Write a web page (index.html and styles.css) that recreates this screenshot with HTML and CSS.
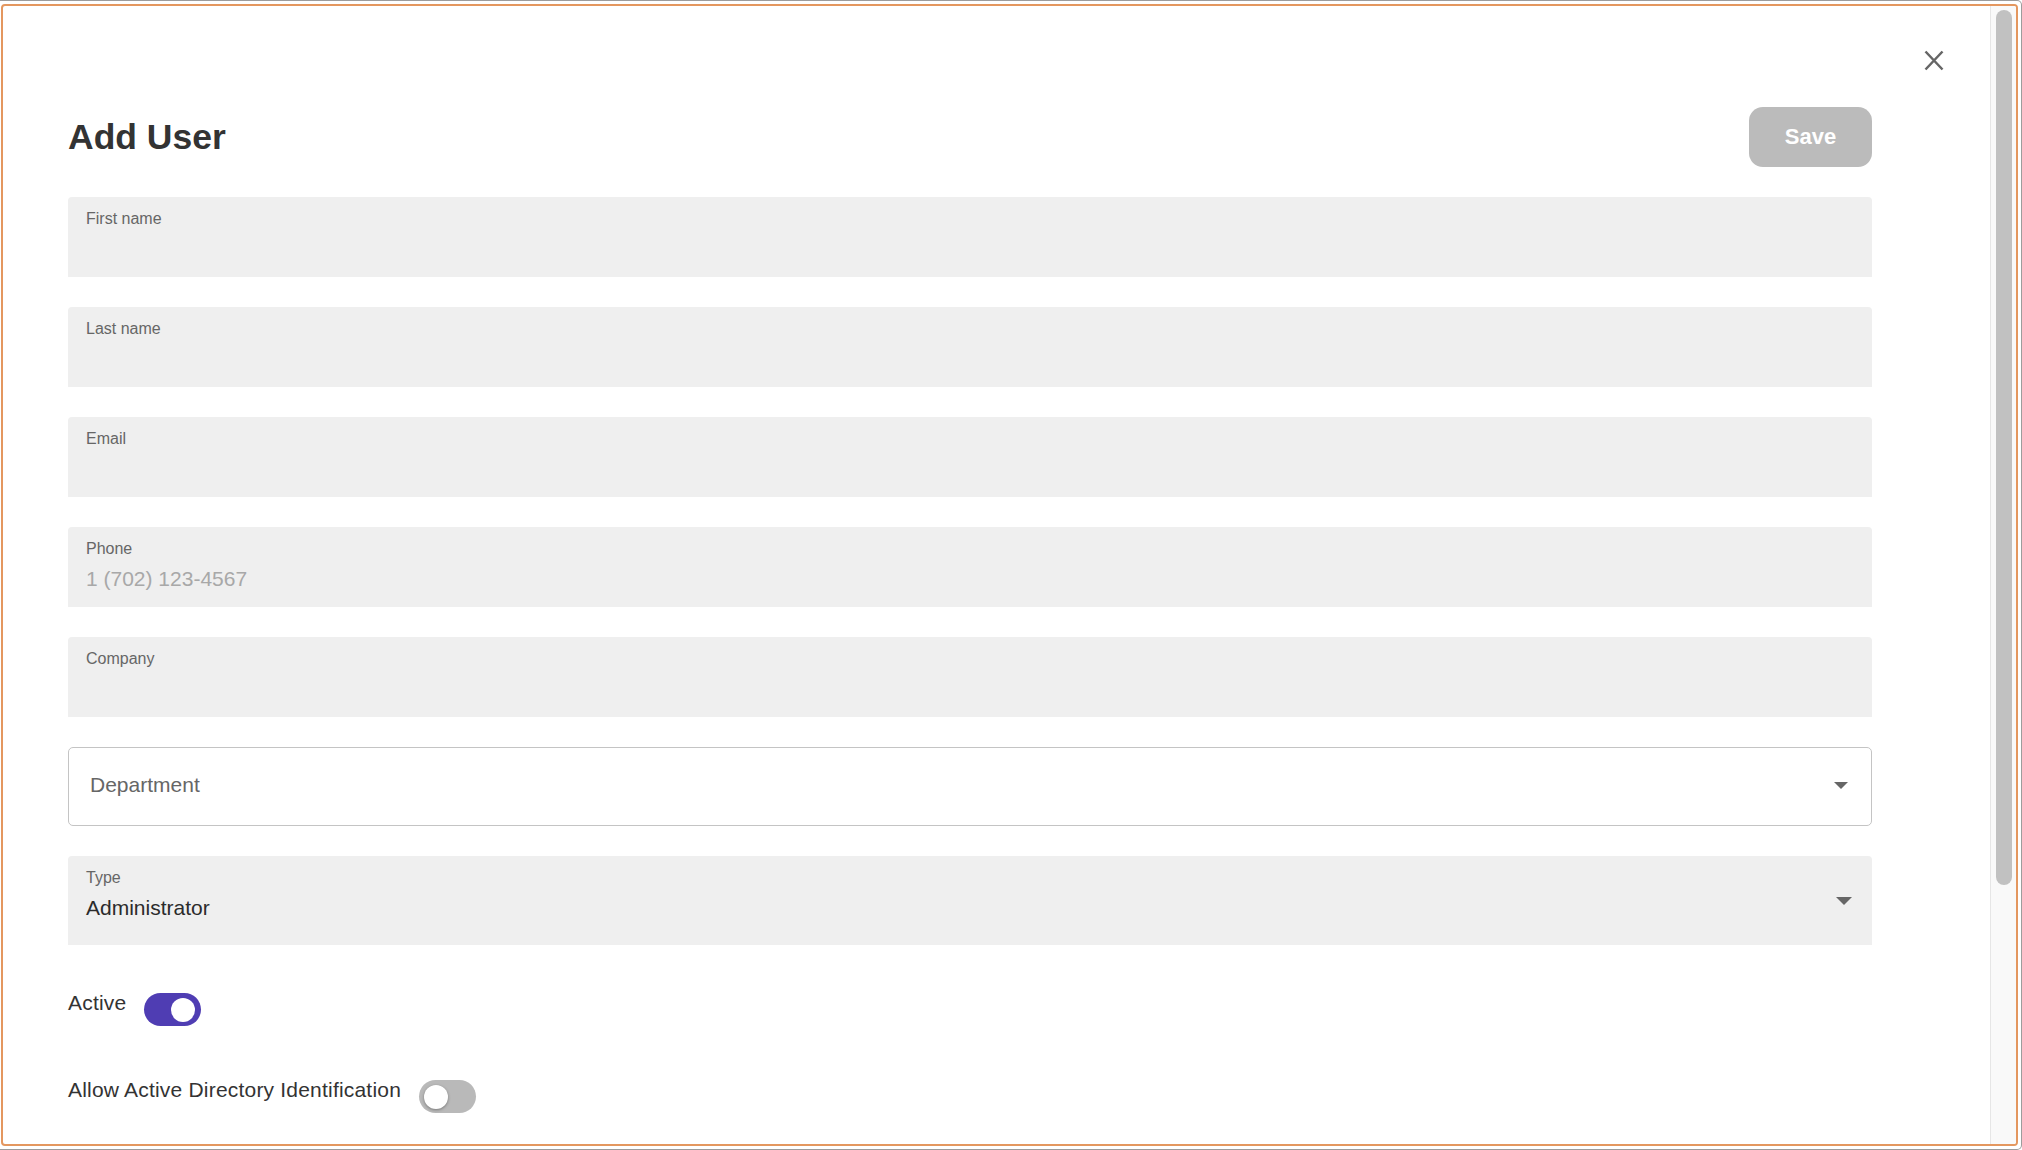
FILE: index.html
```html
<!DOCTYPE html>
<html lang="en">
<head>
<meta charset="utf-8">
<title>Add User</title>
<link rel="stylesheet" href="styles.css">
</head>
<body>
<div class="screen">
  <div class="frame">
    <button class="close" aria-label="Close">
      <svg width="20" height="21" viewBox="0 0 20 21"><path d="M1.5 1.5 L18.5 19.5 M18.5 1.5 L1.5 19.5" stroke="#666" stroke-width="2.5" fill="none"/></svg>
    </button>
    <div class="content">
      <div class="dialog">
        <header class="head">
          <h1 class="title">Add User</h1>
          <button class="save">Save</button>
        </header>
        <div class="form">
          <div class="field"><span class="label">First name</span><span class="value"></span></div>
          <div class="field"><span class="label">Last name</span><span class="value"></span></div>
          <div class="field"><span class="label">Email</span><span class="value"></span></div>
          <div class="field"><span class="label">Phone</span><span class="value placeholder">1 (702) 123-4567</span></div>
          <div class="field"><span class="label">Company</span><span class="value"></span></div>
          <div class="outlined"><span class="outlined-text">Department</span><span class="arrow arrow-sm"></span></div>
          <div class="field field-select">
            <div class="field-main"><span class="label">Type</span><span class="value">Administrator</span></div>
            <span class="arrow arrow-md"></span>
          </div>
        </div>
        <div class="switches">
          <div class="switch-row"><span class="switch-label">Active</span><span class="switch switch-on"></span></div>
          <div class="switch-row"><span class="switch-label">Allow Active Directory Identification</span><span class="switch"></span></div>
        </div>
      </div>
    </div>
    <div class="rail"><div class="thumb"></div></div>
  </div>
</div>
</body>
</html>
```
FILE: styles.css
```css
html, body {
  margin: 0;
  padding: 0;
  background: #fff;
}
body {
  font-family: "Liberation Sans", Arial, sans-serif;
  color: #333;
}
.screen {
  height: 1150px;
  box-sizing: border-box;
  border: 1px solid #9c9c9c;
  border-left: 0;
  border-radius: 0 5px 5px 0;
  padding: 3px 3px 3px 1px;
}
.frame {
  height: 100%;
  box-sizing: border-box;
  border: 2px solid #e4975f;
  border-radius: 4px;
  position: relative;
  overflow: hidden;
  background: #fff;
  display: flex;
}
.close {
  position: absolute;
  top: 44px;
  right: 72px;
  width: 20px;
  height: 21px;
  padding: 0;
  border: 0;
  background: transparent;
  display: flex;
}
.content {
  flex: 1;
  min-width: 0;
  overflow: hidden;
}
.rail {
  width: 26px;
  box-sizing: border-box;
  background: #f9f9f9;
  border-left: 1px solid #e6e6e6;
  padding: 4px 4px 0 5px;
}
.thumb {
  height: 875px;
  border-radius: 8px;
  background: #c1c1c1;
}
.dialog {
  padding: 101px 118px 0 65px;
}
.head {
  display: flex;
  justify-content: space-between;
  align-items: center;
  height: 60px;
  margin-bottom: 30px;
}
.title {
  margin: 0;
  font-size: 35.5px;
  font-weight: 700;
  color: #333;
}
.save {
  width: 123px;
  height: 60px;
  border: 0;
  border-radius: 14px;
  background: #bbbbbb;
  color: #fff;
  font-family: "Liberation Sans", Arial, sans-serif;
  font-weight: 700;
  font-size: 22px;
  padding: 0;
}
.form {
  display: flex;
  flex-direction: column;
  gap: 30px;
}
.field {
  background: #efefef;
  border-radius: 4px 4px 0 0;
  height: 80px;
  box-sizing: border-box;
  padding: 13px 18px 0;
}
.label {
  display: block;
  font-size: 16px;
  line-height: 18px;
  color: #666;
}
.value {
  display: block;
  margin-top: 9px;
  font-size: 21px;
  line-height: 24px;
  min-height: 24px;
  color: #2b2b2b;
}
.placeholder {
  color: #a8a8a8;
}
.field-select {
  height: 89px;
  display: flex;
  align-items: center;
  padding: 0 20px 0 18px;
}
.field-main {
  flex: 1;
  align-self: flex-start;
  padding-top: 13px;
}
.outlined {
  height: 79px;
  box-sizing: border-box;
  border: 1px solid #c4c4c4;
  border-radius: 5px;
  background: #fff;
  display: flex;
  align-items: center;
  padding: 0 23px 3px 21px;
}
.outlined-text {
  flex: 1;
  font-size: 21px;
  color: #666;
}
.arrow {
  width: 0;
  height: 0;
  border-style: solid;
  border-color: #666 transparent transparent transparent;
}
.arrow-sm {
  border-width: 7px 7px 0 7px;
}
.arrow-md {
  border-width: 8px 8px 0 8px;
}
.switches {
  margin-top: 46px;
  display: flex;
  flex-direction: column;
  gap: 52px;
}
.switch-row {
  display: flex;
  align-items: flex-start;
  gap: 18px;
}
.switch-label {
  font-size: 21px;
  line-height: 24px;
  letter-spacing: 0.2px;
  color: #333;
}
.switch {
  margin-top: 2px;
  width: 57px;
  height: 33px;
  border-radius: 17px;
  background: #b9b9b9;
  position: relative;
  flex-shrink: 0;
}
.switch::after {
  content: "";
  position: absolute;
  top: 4.5px;
  left: 5px;
  width: 24px;
  height: 24px;
  border-radius: 50%;
  background: #fff;
  box-shadow: 0 1px 3px rgba(0, 0, 0, 0.35);
}
.switch-on {
  background: #4f3db3;
}
.switch-on::after {
  left: 27px;
  box-shadow: none;
}
```
